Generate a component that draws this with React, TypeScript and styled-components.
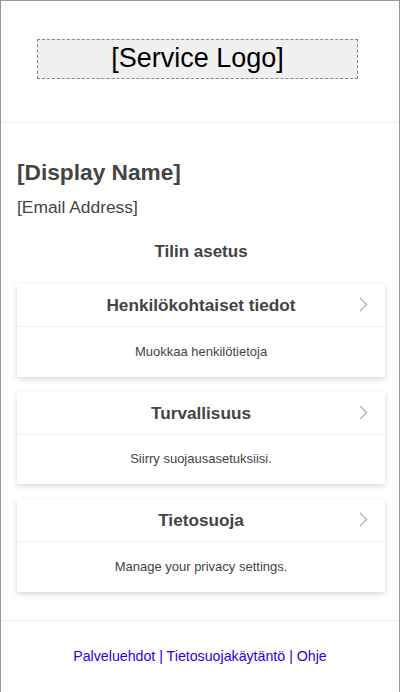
import styled, { createGlobalStyle } from 'styled-components'

const GlobalStyle = createGlobalStyle`
  html, body {
    margin: 0;
    padding: 0;
    background: #fff;
  }
  body {
    font-family: "Liberation Sans", Arial, sans-serif;
    color: #444;
  }
`

const sections = [
  { title: 'Henkilökohtaiset tiedot', desc: 'Muokkaa henkilötietoja' },
  { title: 'Turvallisuus', desc: 'Siirry suojausasetuksiisi.' },
  { title: 'Tietosuoja', desc: 'Manage your privacy settings.' },
]

const links = ['Palveluehdot', 'Tietosuojakäytäntö', 'Ohje']

function Chevron() {
  return (
    <ChevronIcon width="9" height="15" viewBox="0 0 9 15">
      <path d="M1 0.8 L7.6 7.5 L1 14.2" fill="none" stroke="#aaa" strokeWidth="1.2" />
    </ChevronIcon>
  )
}

export default function App() {
  return (
    <>
      <GlobalStyle />
      <Page>
        <Header>
          <LogoBox>[Service Logo]</LogoBox>
        </Header>
        <Main>
          <DisplayName>[Display Name]</DisplayName>
          <Email>[Email Address]</Email>
          <SectionTitle>Tilin asetus</SectionTitle>
          <CardList>
            {sections.map((s) => (
              <Card key={s.title}>
                <CardHead>
                  <CardTitle>{s.title}</CardTitle>
                  <Chevron />
                </CardHead>
                <CardBody>{s.desc}</CardBody>
              </Card>
            ))}
          </CardList>
        </Main>
        <Footer>
          {links.map((l, i) => (
            <span key={l}>
              {i > 0 && <Sep> | </Sep>}
              <FooterLink href="#">{l}</FooterLink>
            </span>
          ))}
        </Footer>
      </Page>
    </>
  )
}

const Page = styled.div`
  width: 400px;
  min-height: 100vh;
  box-sizing: border-box;
  border: 1px solid #999;
  border-bottom: none;
  display: flex;
  flex-direction: column;
`

const Header = styled.header`
  padding: 38px 0 43px 36px;
  border-bottom: 1px solid #eee;
`

const LogoBox = styled.div`
  width: 321px;
  height: 40px;
  box-sizing: border-box;
  border: 1px dashed #888;
  background: #f0f0f0;
  color: #000;
  font-size: 27px;
  line-height: 37px;
  text-align: center;
`

const Main = styled.main`
  padding: 37px 14px 28px 16px;
`

const DisplayName = styled.h2`
  margin: 0;
  font-size: 22.7px;
  line-height: 25px;
  font-weight: bold;
  color: #444;
`

const Email = styled.div`
  margin-top: 13px;
  font-size: 17.4px;
  line-height: 19px;
  color: #444;
`

const SectionTitle = styled.h3`
  margin: 25px 0 0;
  font-size: 17px;
  line-height: 20px;
  font-weight: bold;
  text-align: center;
  color: #444;
`

const CardList = styled.div`
  margin-top: 22px;
  display: flex;
  flex-direction: column;
  gap: 15px;
`

const Card = styled.div`
  background: #fff;
  box-shadow: 0 2px 6px rgba(0, 0, 0, 0.16);
`

const CardHead = styled.div`
  position: relative;
  padding: 11px 40px 11px;
  border-bottom: 1px solid #eee;
`

const CardTitle = styled.div`
  font-size: 17.2px;
  line-height: 20px;
  font-weight: bold;
  text-align: center;
  color: #444;
`

const ChevronIcon = styled.svg`
  position: absolute;
  right: 17px;
  top: 50%;
  margin-top: -8px;
`

const CardBody = styled.div`
  padding: 16.5px 16px 17px;
  font-size: 13px;
  line-height: 16px;
  text-align: center;
  color: #444;
`

const Footer = styled.footer`
  flex: 1;
  border-top: 1px solid #eee;
  padding: 27px 16px 18px;
  text-align: center;
  font-size: 14.2px;
  line-height: 16px;
`

const Sep = styled.span`
  color: #2a00e6;
`

const FooterLink = styled.a`
  color: #2a00e6;
  text-decoration: none;
`
